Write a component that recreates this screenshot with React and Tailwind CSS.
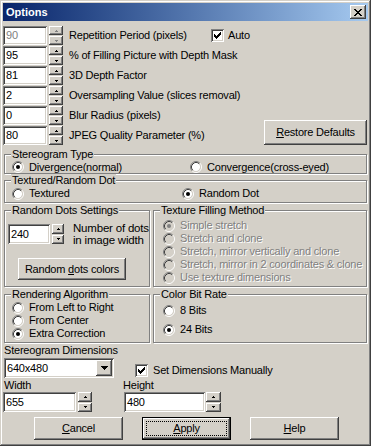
import React from 'react';

const font = "font-['Liberation_Sans',Arial,sans-serif]";
const raised =
  'bg-[#d4d0c8] shadow-[inset_-1px_-1px_#404040,inset_1px_1px_#ffffff,inset_-2px_-2px_#808080,inset_2px_2px_#d4d0c8]';
const sunken =
  'bg-white shadow-[inset_1px_1px_#808080,inset_-1px_-1px_#ffffff,inset_2px_2px_#404040,inset_-2px_-2px_#d4d0c8]';
const disabledText = 'text-[#808080] [text-shadow:1px_1px_#ffffff]';

function Arrow({ up, disabled }) {
  const c = disabled ? '#808080' : '#000000';
  return (
    <svg width="3" height="2" viewBox="0 0 3 2" shapeRendering="crispEdges">
      {up ? (
        <>
          <rect x="1" y="0" width="1" height="1" fill={c} />
          <rect x="0" y="1" width="3" height="1" fill={c} />
        </>
      ) : (
        <>
          <rect x="0" y="0" width="3" height="1" fill={c} />
          <rect x="1" y="1" width="1" height="1" fill={c} />
        </>
      )}
    </svg>
  );
}

function Spin({ cls, disabled }) {
  return (
    <div className={`flex flex-col gap-px shrink-0 ${cls}`}>
      <div className={`flex-1 flex items-center justify-center ${raised}`}>
        <Arrow up disabled={disabled} />
      </div>
      <div className={`flex-1 flex items-center justify-center ${raised}`}>
        <Arrow disabled={disabled} />
      </div>
    </div>
  );
}

function Edit({ value, cls, disabled }) {
  return (
    <div
      className={`${sunken} ${cls} shrink-0 flex items-center pl-[3px] ${
        disabled ? 'text-[#808080]' : 'text-black'
      }`}
    >
      {value}
    </div>
  );
}

function Radio({ checked, disabled }) {
  return (
    <svg width="12" height="12" viewBox="0 0 12 12" className="shrink-0">
      <circle cx="6" cy="6" r="4.2" fill={disabled ? '#d4d0c8' : '#ffffff'} />
      <path d="M2.11 9.89 A5.5 5.5 0 0 1 9.89 2.11" stroke="#808080" fill="none" />
      <path d="M9.89 2.11 A5.5 5.5 0 0 1 2.11 9.89" stroke="#ffffff" fill="none" />
      <path d="M2.82 9.18 A4.5 4.5 0 0 1 9.18 2.82" stroke="#404040" fill="none" />
      <path d="M9.18 2.82 A4.5 4.5 0 0 1 2.82 9.18" stroke="#d4d0c8" fill="none" />
      {checked && <circle cx="6" cy="6" r="2" fill={disabled ? '#808080' : '#000000'} />}
    </svg>
  );
}

function Check() {
  const cols = [2, 3, 4, 3, 2, 1, 0];
  return (
    <div className={`w-[13px] h-[13px] shrink-0 ${sunken}`}>
      <svg width="13" height="13" viewBox="0 0 13 13" shapeRendering="crispEdges">
        {cols.map((y, x) => (
          <rect key={x} x={3 + x} y={3 + y} width="1" height="3" fill="#000000" />
        ))}
      </svg>
    </div>
  );
}

function Group({ title, cls, children }) {
  return (
    <fieldset
      className={`border border-[#808080] shadow-[inset_1px_1px_#ffffff,1px_1px_#ffffff] min-w-0 ${cls}`}
    >
      <legend className="ml-[6px] px-px bg-[#d4d0c8] leading-[13px]">{title}</legend>
      {children}
    </fieldset>
  );
}

function Option({ label, checked, disabled, cls = '' }) {
  return (
    <div className={`flex items-center ${cls}`}>
      <Radio checked={checked} disabled={disabled} />
      <span className={`ml-[5px] ${disabled ? disabledText : ''}`}>{label}</span>
    </div>
  );
}

const rows = [
  { v: '90', label: 'Repetition Period (pixels)', d: true },
  { v: '95', label: '% of Filling Picture with Depth Mask' },
  { v: '81', label: '3D Depth Factor' },
  { v: '2', label: 'Oversampling Value (slices removal)' },
  { v: '0', label: 'Blur Radius (pixels)' },
  { v: '80', label: 'JPEG Quality Parameter (%)' },
];

const filling = [
  'Simple stretch',
  'Stretch and clone',
  'Stretch, mirror vertically and clone',
  'Stretch, mirror in 2 coordinates & clone',
  'Use texture dimensions',
];

export default function App() {
  return (
    <div
      className={`w-[371px] h-[446px] bg-[#d4d0c8] p-[3px] flex flex-col text-[11px] leading-[13px] text-black tracking-[-0.2px] ${font} shadow-[inset_-1px_-1px_#404040,inset_1px_1px_#d4d0c8,inset_-2px_-2px_#808080,inset_2px_2px_#ffffff]`}
    >
      {/* Title bar */}
      <div className="h-[18px] shrink-0 flex items-center justify-between bg-linear-to-r from-[#0a246a] to-[#a6caf0] pl-[3px] pr-[2px]">
        <span className="text-white font-bold tracking-normal">Options</span>
        <div className={`w-[16px] h-[14px] ${raised} flex items-center justify-center`}>
          <svg width="8" height="7" viewBox="0 0 8 7" shapeRendering="crispEdges">
            <rect x="0" y="0" width="2" height="1" />
            <rect x="6" y="0" width="2" height="1" />
            <rect x="1" y="1" width="2" height="1" />
            <rect x="5" y="1" width="2" height="1" />
            <rect x="2" y="2" width="4" height="1" />
            <rect x="3" y="3" width="2" height="1" />
            <rect x="2" y="4" width="4" height="1" />
            <rect x="1" y="5" width="2" height="1" />
            <rect x="5" y="5" width="2" height="1" />
            <rect x="0" y="6" width="2" height="1" />
            <rect x="6" y="6" width="2" height="1" />
          </svg>
        </div>
      </div>

      {/* Numeric parameters */}
      <div className="mt-[5px] flex">
        <div className="flex flex-col gap-px w-[208px] shrink-0">
          {rows.map((r) => (
            <div key={r.label} className="flex items-center h-[19px]">
              <Edit value={r.v} disabled={r.d} cls="w-[44px] h-[19px]" />
              <Spin cls="ml-[2px] w-[14px] h-[19px]" disabled={r.d} />
              <span className="ml-[6px] whitespace-nowrap">{r.label}</span>
            </div>
          ))}
        </div>
        <div className="flex-1 flex flex-col justify-between pr-px">
          <div className="flex items-center mt-[3px]">
            <Check />
            <span className="ml-[4px]">Auto</span>
          </div>
          <div className={`self-end w-[103px] h-[25px] ${raised} flex items-center justify-center`}>
            <span>
              <u>R</u>estore Defaults
            </span>
          </div>
        </div>
      </div>

      {/* Stereogram type */}
      <Group title="Stereogram Type" cls="mt-[3px] ml-px w-[363px]">
        <div className="flex items-center h-[12px] pl-[7px]">
          <Option label="Divergence(normal)" checked cls="w-[178px]" />
          <Option label="Convergence(cross-eyed)" />
        </div>
      </Group>

      <Group title="Textured/Random Dot" cls="ml-px w-[363px]">
        <div className="flex items-start h-[15px] pl-[7px]">
          <Option label="Textured" cls="w-[170px]" />
          <Option label="Random Dot" checked />
        </div>
      </Group>

      {/* Random dots / texture filling */}
      <div className="ml-px flex gap-[3px] mt-px">
        <Group title="Random Dots Settings" cls="w-[146px]">
          <div className="flex items-center mt-[5px] ml-[3px]">
            <Edit value="240" cls="w-[42px] h-[20px]" />
            <Spin cls="ml-[2px] w-[12px] h-[20px]" />
            <div className="ml-[9px] leading-[12px] text-[11.5px]">
              <div>Number of dots</div>
              <div>in image width</div>
            </div>
          </div>
          <div
            className={`mt-[12px] ml-[13px] w-[108px] h-[22px] ${raised} flex items-center justify-center`}
          >
            <span>
              Random <u>d</u>ots colors
            </span>
          </div>
        </Group>
        <Group title="Texture Filling Method" cls="w-[214px]">
          <div className="mt-[2px] pl-[9px] pb-[2px] flex flex-col">
            {filling.map((f, i) => (
              <Option key={f} label={f} checked={i === 0} disabled cls="h-[13px]" />
            ))}
          </div>
        </Group>
      </div>

      {/* Rendering / colour */}
      <div className="ml-px flex gap-[3px] mt-px">
        <Group title="Rendering Algorithm" cls="w-[146px]">
          <div className="pl-[7px] pb-[2px] flex flex-col">
            <Option label="From Left to Right" cls="h-[13px]" />
            <Option label="From Center" cls="h-[13px]" />
            <Option label="Extra Correction" checked cls="h-[13px]" />
          </div>
        </Group>
        <Group title="Color Bit Rate" cls="w-[214px]">
          <div className="pl-[9px] mt-[3px] flex flex-col gap-[6px]">
            <Option label="8 Bits" cls="h-[13px]" />
            <Option label="24 Bits" checked cls="h-[13px]" />
          </div>
        </Group>
      </div>

      {/* Dimensions */}
      <div className="mt-px ml-px">Stereogram Dimensions</div>
      <div className="mt-px flex items-start">
        <div
          className={`ml-px w-[110px] h-[20px] ${sunken} flex items-center justify-between pl-[3px] pr-[2px]`}
        >
          <span>640x480</span>
          <div className={`w-[16px] h-[16px] ${raised} flex items-center justify-center`}>
            <svg width="7" height="4" viewBox="0 0 7 4" shapeRendering="crispEdges">
              <rect x="0" y="0" width="7" height="1" />
              <rect x="1" y="1" width="5" height="1" />
              <rect x="2" y="2" width="3" height="1" />
              <rect x="3" y="3" width="1" height="1" />
            </svg>
          </div>
        </div>
        <div className="ml-[21px] mt-[6px] flex items-center">
          <Check />
          <span className="ml-[5px]">Set Dimensions Manually</span>
        </div>
      </div>
      <div className="mt-px flex">
        <div className="ml-px w-[119px]">Width</div>
        <div>Height</div>
      </div>
      <div className="flex items-center">
        <Edit value="655" cls="w-[73px] h-[20px]" />
        <Spin cls="ml-[2px] w-[14px] h-[20px]" />
        <Edit value="480" cls="ml-[32px] w-[81px] h-[20px]" />
        <Spin cls="ml-px w-[15px] h-[20px]" />
      </div>

      {/* Buttons */}
      <div className="mt-[5px] flex gap-[19px] pl-[31px]">
        <div className={`w-[89px] h-[23px] ${raised} flex items-center justify-center`}>
          <span>
            <u>C</u>ancel
          </span>
        </div>
        <div className={`w-[89px] h-[23px] border border-black ${raised} p-[3px] flex`}>
          <div className="flex-1 border border-dotted border-black flex items-center justify-center">
            <span>
              <u>A</u>pply
            </span>
          </div>
        </div>
        <div className={`w-[89px] h-[23px] ${raised} flex items-center justify-center`}>
          <span>
            <u>H</u>elp
          </span>
        </div>
      </div>
    </div>
  );
}
